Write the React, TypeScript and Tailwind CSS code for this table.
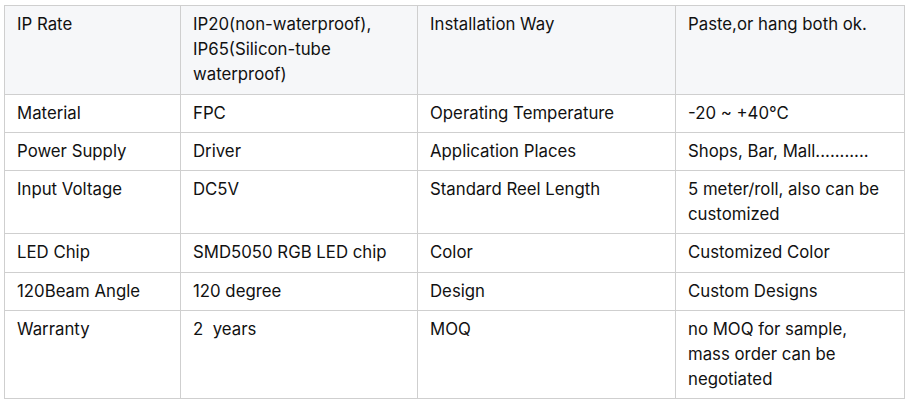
const rows: [string, string, string, string][] = [
  ['IP Rate', 'IP20(non-waterproof), IP65(Silicon-tube waterproof)', 'Installation Way', 'Paste,or hang both ok.'],
  ['Material', 'FPC', 'Operating Temperature', '-20 ~ +40°C'],
  ['Power Supply', 'Driver', 'Application Places', 'Shops, Bar, Mall...........'],
  ['Input Voltage', 'DC5V', 'Standard Reel Length', '5 meter/roll, also can be customized'],
  ['LED Chip', 'SMD5050 RGB LED chip', 'Color', 'Customized Color'],
  ['120Beam Angle', '120 degree', 'Design', 'Custom Designs'],
  ['Warranty', '2\u00a0 years', 'MOQ', 'no MOQ for sample, mass order can be negotiated'],
];

export default function App() {
  return (
    <div className="bg-white pl-[4px] pt-[5px] w-[913px] h-[400px] font-['Inter',sans-serif] text-[16.8px] leading-[25.2px] text-[#111111]">
      <table className="table-fixed border-collapse w-[900px]">
        <colgroup>
          <col className="w-[176px]" />
          <col className="w-[237px]" />
          <col className="w-[258px]" />
          <col className="w-[229px]" />
        </colgroup>
        <tbody>
          {rows.map((r, i) => (
            <tr key={i} className={i === 0 ? 'bg-[#f6f7f9]' : ''}>
              {r.map((c, j) => (
                <td key={j} className="border border-[#cfcfcf] px-[12px] py-[6px] align-top text-left">
                  {c}
                </td>
              ))}
            </tr>
          ))}
        </tbody>
      </table>
    </div>
  );
}
